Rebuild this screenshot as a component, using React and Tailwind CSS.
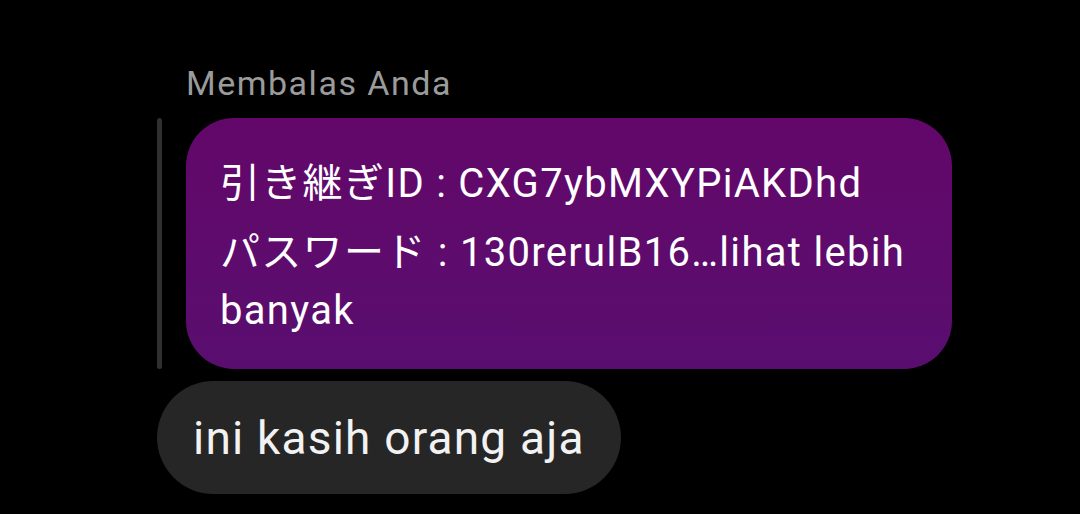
import React from 'react'

const App = () => {
  return (
    <div className="w-[1080px] h-[514px] bg-black overflow-hidden font-['Roboto','Noto_Sans_CJK_JP',sans-serif]">
      <div className="pl-[157px] pt-[63px] flex flex-col">
        <div className="ml-[29px] text-[34px] leading-[40px] tracking-[1.5px] text-[#9b9b9b]">Membalas Anda</div>
        <div className="mt-[15px] flex items-stretch">
          <div className="w-[5px] rounded-full bg-[#303030]" />
          <div className="ml-[24px] w-[766px] rounded-[48px] bg-gradient-to-b from-[#63076a] to-[#590e6f] pl-[34px] pr-[30px] pt-[36px] pb-[29px] text-white text-[40px] tracking-[1.3px]">
            <div className="leading-[59px] mb-[11px]">引き継ぎID : CXG7ybMXYPiAKDhd</div>
            <div className="leading-[58px]">パスワード : 130rerulB16…lihat lebih banyak</div>
          </div>
        </div>
        <div className="mt-[12px] self-start h-[113px] flex items-center px-[36px] rounded-full bg-[#262626] text-[#f2f2f2] text-[46px] leading-[54px] tracking-[1.2px]">
          ini kasih orang aja
        </div>
      </div>
    </div>
  )
}

export default App
